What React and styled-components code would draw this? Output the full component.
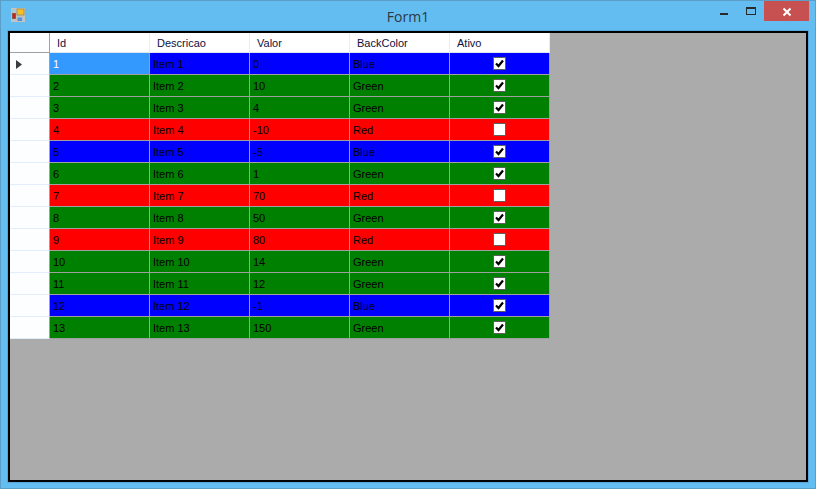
import styled, { createGlobalStyle } from "styled-components";

const GlobalStyle = createGlobalStyle`
  html, body {
    margin: 0;
    padding: 0;
    background: #64bdf0;
  }
`;

const Window = styled.div`
  width: 816px;
  height: 489px;
  box-sizing: border-box;
  display: flex;
  flex-direction: column;
  background: #64bdf0;
  border: 1px solid #5b9fc8;
  font-family: "Liberation Sans", Arial, sans-serif;
  overflow: hidden;
`;
const TitleBar = styled.div`
  height: 30px;
  flex: none;
  display: flex;
  align-items: flex-start;
  position: relative;
`;
const AppIcon = styled.svg`
  width: 14px;
  height: 14px;
  margin: 7px 0 0 10px;
`;
const Title = styled.div`
  position: absolute;
  left: 0;
  right: 0;
  top: 6px;
  text-align: center;
  font-family: "Open Sans", sans-serif;
  font-size: 14px;
  line-height: 19px;
  color: #2c3842;
`;
const Controls = styled.div`
  margin-left: auto;
  margin-right: 6px;
  display: flex;
  align-items: flex-start;
`;
const CtrlButton = styled.div`
  width: ${(p) => p.$w}px;
  height: 20px;
  box-sizing: border-box;
  padding-top: ${(p) => p.$top}px;
  display: flex;
  align-items: flex-start;
  justify-content: center;
  background: ${(p) => p.$bg || "transparent"};
  svg {
    display: block;
  }
`;
const Client = styled.div`
  flex: 1;
  margin: 0 7px 6px 7px;
  background: #ababab;
  border: 2px solid #000;
  box-shadow: 0 0 0 1px #55a6d9;
  display: flex;
  align-items: flex-start;
`;
const Grid = styled.div`
  display: grid;
  grid-template-columns: 40px repeat(5, 100px);
  grid-template-rows: 20px;
  grid-auto-rows: 22px;
  font-size: 11px;
`;
const Corner = styled.div`
  box-sizing: border-box;
  background: #fdfeff;
  border-right: 1px solid #a0a0a0;
  border-bottom: 1px solid #a0a0a0;
`;
const HeadCell = styled.div`
  box-sizing: border-box;
  background: #fff;
  color: #101040;
  padding-left: 7px;
  line-height: 21px;
  border-right: 1px solid #e3eefb;
  border-bottom: 1px solid #dfe6ef;
`;
const RowHead = styled.div`
  box-sizing: border-box;
  background: #fdfeff;
  border-right: 1px solid #a0a0a0;
  border-bottom: 1px solid #e3eefb;
  display: flex;
  align-items: center;
  padding: 1px 0 0 6px;
  svg {
    display: block;
  }
`;
const Cell = styled.div`
  box-sizing: border-box;
  background: ${(p) => (p.$selected ? "#3399ff" : p.$color)};
  color: ${(p) => (p.$selected ? "#fff" : "#000")};
  padding: ${(p) => (p.$center ? "0" : "1px 0 0 3px")};
  line-height: 20px;
  border-right: 1px solid #a0a0a0;
  border-bottom: 1px solid #a0a0a0;
  display: flex;
  align-items: center;
  justify-content: ${(p) => (p.$center ? "center" : "flex-start")};
`;
const Check = styled.div`
  width: 13px;
  height: 13px;
  box-sizing: border-box;
  background: #fff;
  border: 1px solid #5e5e5e;
  display: flex;
  align-items: center;
  justify-content: center;
`;

const colors = { Blue: "#0000ff", Green: "#008000", Red: "#ff0000" };
const rows = [
  [1, "Item 1", 0, "Blue", true],
  [2, "Item 2", 10, "Green", true],
  [3, "Item 3", 4, "Green", true],
  [4, "Item 4", -10, "Red", false],
  [5, "Item 5", -5, "Blue", true],
  [6, "Item 6", 1, "Green", true],
  [7, "Item 7", 70, "Red", false],
  [8, "Item 8", 50, "Green", true],
  [9, "Item 9", 80, "Red", false],
  [10, "Item 10", 14, "Green", true],
  [11, "Item 11", 12, "Green", true],
  [12, "Item 12", -1, "Blue", true],
  [13, "Item 13", 150, "Green", true],
];

export default function App() {
  return (
    <Window>
      <GlobalStyle />
      <TitleBar>
        <AppIcon viewBox="0 0 14 14">
          <rect x="0.5" y="0.5" width="13" height="13" fill="#a9c8d8" stroke="#c4c4bc" />
          <path d="M0 4.5 H6 M5.5 0 V14 M0 11.5 H6 M6 8.5 H14" stroke="#c4c4bc" fill="none" />
          <rect x="6" y="1" width="7" height="6" fill="#f5c02e" stroke="#a58a3c" strokeWidth="0.8" />
          <rect x="1.5" y="5.5" width="3" height="5" fill="#c8221c" stroke="#8a4a40" strokeWidth="0.8" />
          <rect x="6.5" y="9.5" width="4.5" height="3.5" fill="#5a8fdc" />
        </AppIcon>
        <Title>Form1</Title>
        <Controls>
          <CtrlButton $w={28} $top={12}>
            <svg width="8" height="2" viewBox="0 0 8 2">
              <rect width="8" height="2" fill="#2a2a2a" />
            </svg>
          </CtrlButton>
          <CtrlButton $w={26} $top={6}>
            <svg width="10" height="8" viewBox="0 0 10 8">
              <rect x="0.5" y="0.5" width="9" height="7" fill="none" stroke="#2a2a2a" />
              <rect width="10" height="2" fill="#2a2a2a" />
            </svg>
          </CtrlButton>
          <CtrlButton $w={45} $top={6} $bg="#c75050">
            <svg width="10" height="10" viewBox="0 0 10 10">
              <path d="M1.5 1.5 L8.5 8.5 M8.5 1.5 L1.5 8.5" stroke="#fff" strokeWidth="2" />
            </svg>
          </CtrlButton>
        </Controls>
      </TitleBar>
      <Client>
        <Grid>
          <Corner />
          {["Id", "Descricao", "Valor", "BackColor", "Ativo"].map((h) => (
            <HeadCell key={h}>{h}</HeadCell>
          ))}
          {rows.map((r, i) => {
            const color = colors[r[3]];
            return [
              <RowHead key={"h" + i}>
                {i === 0 && (
                  <svg width="6" height="9" viewBox="0 0 6 9">
                    <path d="M0 0 L6 4.5 L0 9 Z" fill="#3c3c3c" />
                  </svg>
                )}
              </RowHead>,
              <Cell key={"a" + i} $color={color} $selected={i === 0}>{r[0]}</Cell>,
              <Cell key={"b" + i} $color={color}>{r[1]}</Cell>,
              <Cell key={"c" + i} $color={color}>{r[2]}</Cell>,
              <Cell key={"d" + i} $color={color}>{r[3]}</Cell>,
              <Cell key={"e" + i} $color={color} $center>
                <Check>
                  {r[4] && (
                    <svg width="9" height="9" viewBox="0 0 9 9">
                      <path d="M1 4.5 L3.5 7 L8 1.5" fill="none" stroke="#000" strokeWidth="2.2" />
                    </svg>
                  )}
                </Check>
              </Cell>,
            ];
          })}
        </Grid>
      </Client>
    </Window>
  );
}
